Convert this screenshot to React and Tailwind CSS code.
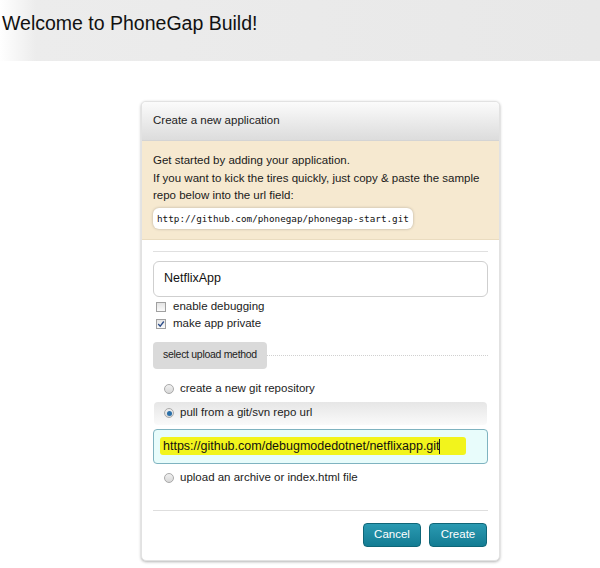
import React from "react";

const Radio = ({ checked }) => (
  <span className="w-[10px] h-[10px] rounded-full border border-[#a9a9a9] bg-gradient-to-b from-[#f0f0f0] to-[#d8d8d8] flex items-center justify-center shrink-0">
    {checked && <span className="w-[5px] h-[5px] rounded-full bg-[#2a6fa8]" />}
  </span>
);

const Check = ({ checked }) => (
  <span className="w-[10px] h-[10px] border border-[#a0a0a0] bg-gradient-to-b from-[#e4e4e4] to-[#fafafa] flex items-center justify-center shrink-0">
    {checked && (
      <svg width="8" height="8" viewBox="0 0 8 8">
        <path d="M1.2 4 L3.2 6.2 L6.8 1.5" fill="none" stroke="#2c4d8a" strokeWidth="1.3" />
      </svg>
    )}
  </span>
);

const App = () => {
  return (
    <div className="w-[600px] h-[568px] bg-white font-['Liberation_Sans',Arial,sans-serif] text-[#222] overflow-hidden">
      <div className="h-[61px] bg-gradient-to-r from-white via-[#ececec] via-[6%] to-[#e8e8e8] pl-[2px] pt-[11px]">
        <h1 className="text-[19.5px] leading-[24px] text-[#111]">Welcome to PhoneGap Build!</h1>
      </div>

      <div className="ml-[141px] mt-[40px] w-[359px] rounded-[5px] border border-[#e2e2e2] bg-white shadow-[0_1px_3px_rgba(0,0,0,0.3)] overflow-hidden">
        <div className="h-[39px] px-[11px] flex items-center text-[11.5px] text-[#222] bg-gradient-to-b from-[#fbfbfb] to-[#dcdcdc] border-b border-[#d4d4d4]">
          Create a new application
        </div>

        <div className="bg-[#f6e9d0] px-[11px] pt-[11px] pb-[10px] border-b border-[#eadcc0]">
          <p className="text-[11.5px] leading-[17.5px] text-[#1a1a1a]">
            Get started by adding your application.
            <br />
            If you want to kick the tires quickly, just copy &amp; paste the sample repo below into the url field:
          </p>
          <div className="mt-[1px] inline-block bg-white rounded-[6px] shadow-[0_0_3px_rgba(0,0,0,0.25)] px-[4px] h-[21px] leading-[21px] text-[9.3px] font-['DejaVu_Sans_Mono',monospace] text-[#111]">
            http://github.com/phonegap/phonegap-start.git
          </div>
        </div>

        <div className="px-[11px] pt-[11px] pb-[13px]">
          <div className="border-t border-[#e0e0e0]" />
          <div className="mt-[9px] h-[36px] rounded-[6px] border border-[#cfcfcf] flex items-center px-[10px] text-[12.5px] text-[#111]">
            NetflixApp
          </div>
          <div className="mt-[2px] flex items-center gap-[7px] pl-[3px] h-[17px] text-[11.5px]">
            <Check />
            <span>enable debugging</span>
          </div>
          <div className="flex items-center gap-[7px] pl-[3px] h-[17px] text-[11.5px]">
            <Check checked />
            <span>make app private</span>
          </div>
          <div className="mt-[9px] flex items-center">
            <div className="h-[27px] w-[114px] rounded-[4px] bg-[#dadada] flex items-center justify-center text-[10.5px] tracking-[-0.3px] text-[#222]">
              select upload method
            </div>
            <div className="flex-1 border-t border-dotted border-[#d0d0d0]" />
          </div>

          <div className="mt-[11px] flex items-center gap-[6px] pl-[11px] h-[18px] text-[11.5px]">
            <Radio />
            <span>create a new git repository</span>
          </div>
          <div className="mt-[4px] ml-[1px] mr-[1px] h-[23px] rounded-[4px] bg-gradient-to-b from-[#e6e6e6] to-[#fafafa] flex items-center gap-[6px] pl-[10px] text-[11.5px]">
            <Radio checked />
            <span>pull from a git/svn repo url</span>
          </div>
          <div className="mt-[4px] h-[35px] rounded-[4px] border border-[#7fb3c0] bg-[#e8fcfb] flex items-center px-[9px] text-[12.5px] text-[#111]">
            <span className="relative">
              <span className="absolute left-[-3px] right-[-26px] top-[0px] bottom-[0px] bg-[#f2f41c] rounded-[3px]" />
              <span className="relative">https://github.com/debugmodedotnet/netflixapp.git</span>
            </span>
            <span className="relative w-[1px] h-[15px] bg-[#222] ml-[-1px]" />
          </div>
          <div className="mt-[5px] flex items-center gap-[6px] pl-[11px] h-[18px] text-[11.5px]">
            <Radio />
            <span>upload an archive or index.html file</span>
          </div>

          <div className="mt-[23px] border-t border-[#dedede]" />

          <div className="mt-[12px] flex justify-end gap-[8px] pr-[1px]">
            <button className="h-[24px] w-[58px] rounded-[4px] border border-[#0f6678] bg-gradient-to-b from-[#2a9ab2] to-[#137c93] text-white text-[11.5px]">
              Cancel
            </button>
            <button className="h-[24px] w-[58px] rounded-[4px] border border-[#0f6678] bg-gradient-to-b from-[#2a9ab2] to-[#137c93] text-white text-[11.5px]">
              Create
            </button>
          </div>
        </div>
      </div>
    </div>
  );
};

export default App;
